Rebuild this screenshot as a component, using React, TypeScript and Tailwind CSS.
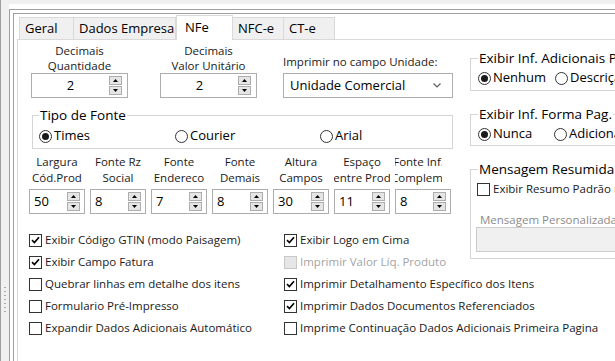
import React from 'react'

const TABS = [
  { label: 'Geral', w: 'w-[55px]' },
  { label: 'Dados Empresa', w: 'w-[103px]' },
  { label: 'NFe', w: 'w-[57px]', active: true },
  { label: 'NFC-e', w: 'w-[52px]' },
  { label: 'CT-e', w: 'w-[52px]' },
]

const SMALL_SPINS = [
  { l1: 'Largura', l2: 'Cód.Prod', v: '50' },
  { l1: 'Fonte Rz', l2: 'Social', v: '8' },
  { l1: 'Fonte', l2: 'Endereco', v: '7' },
  { l1: 'Fonte', l2: 'Demais', v: '8' },
  { l1: 'Altura', l2: 'Campos', v: '30' },
  { l1: 'Espaço', l2: 'entre Prod', v: '11' },
  { l1: 'Fonte Inf.', l2: 'Complem.', v: '8', narrow: true },
]

const CHECKS = [
  { label: 'Exibir Código GTIN (modo Paisagem)', checked: true },
  { label: 'Exibir Logo em Cima', checked: true },
  { label: 'Exibir Campo Fatura', checked: true },
  { label: 'Imprimir Valor Líq. Produto', disabled: true },
  { label: 'Quebrar linhas em detalhe dos itens' },
  { label: 'Imprimir Detalhamento Específico dos Itens', checked: true },
  { label: 'Formulario Pré-Impresso' },
  { label: 'Imprimir Dados Documentos Referenciados', checked: true },
  { label: 'Expandir Dados Adicionais Automático' },
  { label: 'Imprime Continuação Dados Adicionais Primeira Pagina' },
]

function SpinButtons() {
  return (
    <div className="flex flex-col gap-px">
      <div className="w-[13px] h-[9px] border border-[#adadad] bg-[#e5e5e5] flex items-center justify-center">
        <svg width="5" height="3" viewBox="0 0 5 3">
          <path d="M2.5 0 L5 3 L0 3 Z" fill="#000" />
        </svg>
      </div>
      <div className="w-[13px] h-[9px] border border-[#adadad] bg-[#e5e5e5] flex items-center justify-center">
        <svg width="5" height="3" viewBox="0 0 5 3">
          <path d="M0 0 L5 0 L2.5 3 Z" fill="#000" />
        </svg>
      </div>
    </div>
  )
}

function Check({ label, checked, disabled }: { label: string; checked?: boolean; disabled?: boolean }) {
  return (
    <div className="flex items-center h-[22px] whitespace-nowrap">
      <div
        className={`w-[13px] h-[13px] shrink-0 border flex items-center justify-center ${
          disabled ? 'border-[#c8c8c8] bg-[#e6e6e6]' : 'border-[#333333] bg-white'
        }`}
      >
        {checked && (
          <svg width="9" height="8" viewBox="0 0 9 8">
            <path d="M1 4.2 L3.4 6.5 L8 1.2" stroke="#000" strokeWidth="1.7" fill="none" />
          </svg>
        )}
      </div>
      <span className={`ml-[3px] text-[11.5px] ${disabled ? 'text-[#a3a3a3]' : 'text-[#1a1a1a]'}`}>{label}</span>
    </div>
  )
}

function Radio({ label, checked }: { label: string; checked?: boolean }) {
  return (
    <div className="flex items-center h-[18px] whitespace-nowrap">
      <div className="w-[13px] h-[13px] shrink-0 rounded-full border border-[#333333] bg-white flex items-center justify-center">
        {checked && <div className="w-[7px] h-[7px] rounded-full bg-[#1a1a1a]" />}
      </div>
      <span className="ml-[2px] text-[13px] text-black">{label}</span>
    </div>
  )
}

export default function App() {
  return (
    <div className="w-[615px] h-[361px] overflow-hidden bg-white flex font-['Open_Sans',sans-serif]">
      {/* left splitter bar */}
      <div className="w-[9px] shrink-0 h-full bg-[#f0f0f0] border-l border-[#a0a0a0] flex flex-col items-center pt-[287px] gap-[3px]">
        {[0, 1, 2, 3, 4, 5, 6].map((i) => (
          <div key={i} className="w-[2px] h-px bg-[#a8a8a8]" />
        ))}
      </div>

      <div className="flex-1 flex flex-col min-w-0">
        <div className="h-[4px] bg-[#f0f0f0] shrink-0" />
        <div className="pt-[5px] flex-1 flex flex-col">
          <div className="flex-1 border-l border-t border-[#a0a0a0] pl-[3px] pt-[3px] flex flex-col">
            <div className="flex-1 border-l border-t border-[#a0a0a0] pl-[3px] pt-px flex flex-col">
              {/* tab strip */}
              <div className="h-[24px] flex items-end pl-[2px]">
                {TABS.map((t) =>
                  t.active ? (
                    <div
                      key={t.label}
                      className={`${t.w} h-[25px] -mb-px relative z-10 bg-white border-t border-l border-r border-[#d9d9d9] flex items-start pl-[8px] pt-[2px] text-[13px] text-black`}
                    >
                      {t.label}
                    </div>
                  ) : (
                    <div
                      key={t.label}
                      className={`${t.w} h-[22px] bg-[#f0f0f0] border-t border-l border-r border-[#d9d9d9] -ml-px first:ml-0 flex items-center pl-[5px] text-[13px] text-black whitespace-nowrap`}
                    >
                      {t.label}
                    </div>
                  )
                )}
              </div>

              {/* tab page */}
              <div className="flex-1 border-l border-t border-[#d9d9d9] flex">
                {/* left column */}
                <div className="w-[452px] shrink-0 pl-[11px] flex flex-col">
                  <div className="flex items-start pt-[3px]">
                    <div className="ml-[2px] w-[97px] flex flex-col items-center">
                      <div className="text-[11.5px] leading-[15px] text-[#1a1a1a] text-center">
                        Decimais
                        <br />
                        Quantidade
                      </div>
                      <div className="w-[97px] h-[25px] border border-[#adadad] bg-white flex items-center pr-[5px]">
                        <span className="flex-1 text-center text-[13px] text-black">2</span>
                        <SpinButtons />
                      </div>
                    </div>
                    <div className="ml-[32px] w-[97px] flex flex-col items-center">
                      <div className="text-[11.5px] leading-[15px] text-[#1a1a1a] text-center">
                        Decimais
                        <br />
                        Valor Unitário
                      </div>
                      <div className="w-[97px] h-[25px] border border-[#adadad] bg-white flex items-center pr-[5px]">
                        <span className="flex-1 text-center text-[13px] text-black">2</span>
                        <SpinButtons />
                      </div>
                    </div>
                    <div className="ml-[26px] mt-[11px] w-[170px] flex flex-col">
                      <div className="text-[11.5px] leading-[16px] text-[#1a1a1a] whitespace-nowrap">
                        Imprimir no campo Unidade:
                      </div>
                      <div className="mt-[3px] h-[25px] border border-[#adadad] bg-white flex items-center pl-[6px] pr-[11px]">
                        <span className="flex-1 text-[13px] text-black whitespace-nowrap">Unidade Comercial</span>
                        <svg width="8" height="5" viewBox="0 0 8 5">
                          <path d="M0.5 0.5 L4 4 L7.5 0.5" stroke="#606060" strokeWidth="1.2" fill="none" />
                        </svg>
                      </div>
                    </div>
                  </div>

                  <fieldset className="ml-[3px] mt-[8px] w-[421px] border border-[#d5d5d5] pl-[6px] pt-[3px] pb-[3px]">
                    <legend className="px-px text-[13.5px] leading-[18px] text-black">Tipo de Fonte</legend>
                    <div className="flex">
                      <div className="w-[136px]">
                        <Radio label="Times" checked />
                      </div>
                      <div className="w-[145px]">
                        <Radio label="Courier" />
                      </div>
                      <Radio label="Arial" />
                    </div>
                  </fieldset>

                  <div className="mt-[5px] flex gap-[5px]">
                    {SMALL_SPINS.map((s, i) => (
                      <div key={i} className="w-[56px] flex flex-col">
                        <div
                          className={`${
                            s.narrow ? 'w-[47px]' : 'w-[56px]'
                          } overflow-hidden whitespace-nowrap flex flex-col items-center text-[11.5px] leading-[16px] text-[#1a1a1a]`}
                        >
                          <span>{s.l1}</span>
                          <span>{s.l2}</span>
                        </div>
                        <div className="mt-[3px] w-[56px] h-[25px] border border-[#adadad] bg-white flex items-center pl-[4px] pr-[4px]">
                          <span className="flex-1 text-[13px] text-black">{s.v}</span>
                          <SpinButtons />
                        </div>
                      </div>
                    ))}
                  </div>

                  <div className="mt-[15px] grid grid-cols-[255px_190px]">
                    {CHECKS.map((c) => (
                      <Check key={c.label} label={c.label} checked={c.checked} disabled={c.disabled} />
                    ))}
                  </div>
                </div>

                {/* right column */}
                <div className="w-[260px] shrink-0 flex flex-col">
                  <fieldset className="mt-[9px] w-[250px] border border-[#d5d5d5] pl-[7px] pt-[2px] pb-[3px]">
                    <legend className="px-px text-[13.5px] leading-[18px] text-black whitespace-nowrap">
                      Exibir Inf. Adicionais Produto
                    </legend>
                    <div className="flex">
                      <div className="w-[77px]">
                        <Radio label="Nenhum" checked />
                      </div>
                      <Radio label="Descrição" />
                    </div>
                  </fieldset>

                  <fieldset className="mt-[14px] w-[250px] border border-[#d5d5d5] pl-[7px] pt-[2px] pb-[2px]">
                    <legend className="px-px text-[13.5px] leading-[18px] text-black whitespace-nowrap">
                      Exibir Inf. Forma Pag.
                    </legend>
                    <div className="flex">
                      <div className="w-[76px]">
                        <Radio label="Nunca" checked />
                      </div>
                      <Radio label="Adicional" />
                    </div>
                  </fieldset>

                  <fieldset className="mt-[14px] w-[250px] border border-[#d5d5d5] pl-[6px] pt-[2px] pb-[6px]">
                    <legend className="ml-px px-px text-[13.5px] leading-[18px] text-black whitespace-nowrap">
                      Mensagem Resumida Cupom
                    </legend>
                    <div className="flex items-center h-[18px] whitespace-nowrap">
                      <div className="w-[13px] h-[13px] border border-[#333333] bg-white" />
                      <span className="ml-[3px] text-[11.5px] text-[#1a1a1a]">Exibir Resumo Padrão no Cupom</span>
                    </div>
                    <div className="mt-[15px] ml-[3px] text-[11.5px] leading-[14px] text-[#8c8c8c] whitespace-nowrap">
                      Mensagem Personalizada
                    </div>
                    <div className="-ml-px h-[25px] border border-[#cccccc] bg-[#f0f0f0]" />
                  </fieldset>
                </div>
              </div>
            </div>
          </div>
        </div>
      </div>
    </div>
  )
}
